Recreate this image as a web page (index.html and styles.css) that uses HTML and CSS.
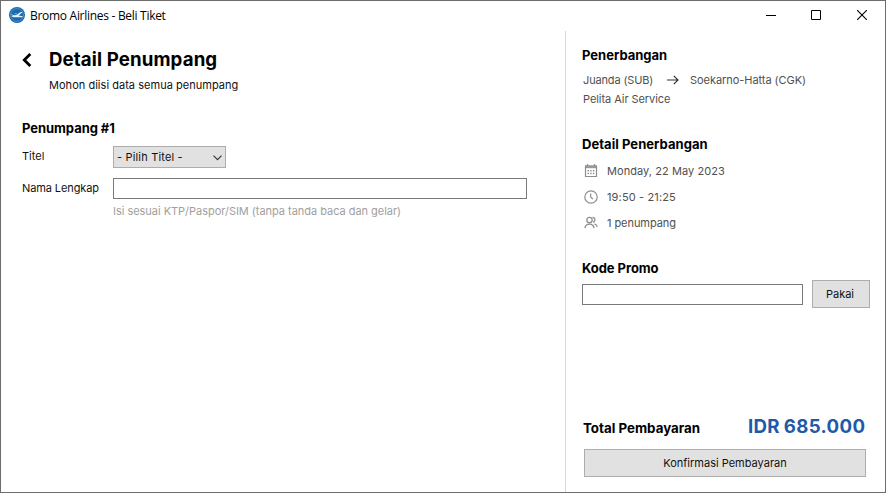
FILE: index.html
```html
<!DOCTYPE html>
<html lang="id">
<head>
<meta charset="utf-8">
<title>Bromo Airlines - Beli Tiket</title>
<link rel="stylesheet" href="styles.css">
</head>
<body>
<div class="window">
  <header class="titlebar">
    <svg class="logo" width="16" height="16" viewBox="0 0 16 16"><circle cx="8" cy="8" r="8" fill="#1c68ae"/><circle cx="8" cy="8" r="6.4" fill="none" stroke="#5ba0d6" stroke-width=".7"/><path d="M1.8 7.6 3 7.4 5 8.3 7.6 8 10.8 5.6 13.2 4.8 13.3 5.6 9.6 8.4 13.8 9.2 13.4 10.2 7.8 10.2 4.5 10.2 2.2 9.2 4.2 9Z" fill="#e3f0fa"/><path d="M4.6 6.2 8.4 6.7 7.4 7.4Z" fill="#b9d9ef"/></svg>
    <span class="app-name">Bromo Airlines - Beli Tiket</span>
    <div class="controls">
      <svg width="10" height="10"><path d="M0 5.5H10" stroke="#000"/></svg>
      <svg width="10" height="10"><path d="M.5.5H9.5V9.5H.5Z" fill="none" stroke="#000"/></svg>
      <svg width="10" height="10"><path d="M0 0 10 10M10 0 0 10" stroke="#000" stroke-width="1.1"/></svg>
    </div>
  </header>
  <div class="content">
    <main class="passengers">
      <div class="heading">
        <svg class="back" width="10" height="14" viewBox="0 0 10 14"><path d="M8.3 1 2.3 7 8.3 13" fill="none" stroke="#000" stroke-width="2.8"/></svg>
        <div>
          <h1>Detail Penumpang</h1>
          <p class="subtitle">Mohon diisi data semua penumpang</p>
        </div>
      </div>
      <h2 class="passenger-title">Penumpang #1</h2>
      <div class="row row-title">
        <span class="label">Titel</span>
        <div class="select"><span>- Pilih Titel -</span><svg width="9" height="6" viewBox="0 0 9 6"><path d="M.5.7 4.5 4.7 8.5.7" fill="none" stroke="#333" stroke-width="1.1"/></svg></div>
      </div>
      <div class="row row-name">
        <span class="label label-name">Nama Lengkap</span>
        <div class="input"></div>
      </div>
      <p class="hint">Isi sesuai KTP/Paspor/SIM (tanpa tanda baca dan gelar)</p>
    </main>
    <aside class="summary">
      <h2 class="flight-title">Penerbangan</h2>
      <div class="route"><span class="from">Juanda (SUB)</span><svg width="12" height="10" viewBox="0 0 12 10"><path d="M0 5H11M6.8.8 11 5 6.8 9.2" fill="none" stroke="#333" stroke-width="1.2"/></svg><span class="to">Soekarno-Hatta (CGK)</span></div>
      <p class="airline">Pelita Air Service</p>
      <h2 class="detail-title">Detail Penerbangan</h2>
      <div class="details">
        <div class="detail"><svg width="14" height="14" viewBox="0 0 14 14"><path d="M1 1.2H13V4.2H1Z" fill="#999"/><path d="M1.5 2V12.5H12.5V2M3.5 0V2M10.5 0V2" fill="none" stroke="#8e8e8e" stroke-width="1.2"/><path d="M3.5 6.8H11M3.5 9.5H11" stroke="#8e8e8e" stroke-width="1.4" stroke-dasharray="1.4 1.3"/></svg><span class="date">Monday, 22 May 2023</span></div>
        <div class="detail"><svg width="14" height="14" viewBox="0 0 14 14"><circle cx="7" cy="7" r="6.2" fill="none" stroke="#8e8e8e" stroke-width="1.2"/><path d="M6.7 3.5V7.3L9 9" fill="none" stroke="#8e8e8e" stroke-width="1.2"/></svg><span class="time">19:50 - 21:25</span></div>
        <div class="detail"><svg width="14" height="14" viewBox="0 0 14 14"><g fill="none" stroke="#8e8e8e" stroke-width="1.3"><circle cx="5.5" cy="4" r="2.7"/><path d="M.9 12.2C1.3 9.4 3 8.1 5.5 8.1S9.7 9.4 10.1 12.2M8.5 1.3C10.4 1.2 11 2.6 10.9 3.8S10 6.1 9.2 6.4M10.3 7.9C12 8.3 12.8 9.2 13.2 10.8"/></g></svg><span class="count">1 penumpang</span></div>
      </div>
      <h2 class="promo-title">Kode Promo</h2>
      <div class="promo"><div class="input promo-input"></div><div class="button apply"><span>Pakai</span></div></div>
      <div class="total"><span class="total-label">Total Pembayaran</span><span class="price">IDR 685.000</span></div>
      <div class="button confirm"><span>Konfirmasi Pembayaran</span></div>
    </aside>
  </div>
</div>
</body>
</html>
```
FILE: styles.css
```css
* { box-sizing: border-box; }
body { margin: 0; font: 11px/16px Inter, sans-serif; color: #111; background: #fff; }
h1, h2, p { margin: 0; }
svg { display: block; flex: none; }
span, h1, h2, p { white-space: nowrap; }
.window { width: 886px; height: 493px; border: 1px solid #6d6d6d; display: flex; flex-direction: column; }
.titlebar { height: 30px; display: flex; align-items: flex-start; padding: 6px 17px 0 8px; }
.app-name { margin: 1px 0 0 5px; font: 12px/16px "Open Sans", "Noto Sans", sans-serif; color: #000; letter-spacing: -0.29px; }
.controls { margin: 3px 0 0 auto; width: 102px; display: flex; justify-content: flex-end; padding-right: 1px; }
.controls svg + svg { margin-left: 35px; }
.controls svg:last-child { margin-left: 36px; }
.content { flex: 1; display: flex; }
.passengers { width: 564px; padding: 16px 0 0 21px; }
.heading { display: flex; }
.back { margin: 6px 17px 0 0; }
h1 { font-size: 18.67px; line-height: 24px; padding-top: 1px; font-weight: 700; color: #000; letter-spacing: 0.12px; }
.subtitle { margin-top: 5px; letter-spacing: 0.03px; }
h2 { font-size: 13px; line-height: 16px; font-weight: 700; color: #000; }
.passenger-title { margin-top: 27px; letter-spacing: -0.05px; }
.row { display: flex; }
.label { width: 91px; flex: none; }
.label-name { letter-spacing: -0.1px; }
.row-title { margin-top: 10px; height: 22px; }
.row-title .label { padding-top: 2px; }
.select { width: 113px; height: 22px; border: 1px solid #adadad; background: #e1e1e1; display: flex; align-items: center; justify-content: space-between; padding: 0 3px 0 3px; letter-spacing: 0.17px; }
.select svg { margin-top: 2px; }
.row-name { margin-top: 10px; height: 21px; }
.row-name .label { padding-top: 2px; }
.input { width: 414px; height: 21px; border: 1px solid #7a7a7a; background: #fff; }
.hint { margin: 4px 0 0 91px; color: #a0a0a0; letter-spacing: -0.03px; }
.summary { flex: 1; border-left: 1px solid #d9d9d9; padding: 16px 15px 0 16px; color: #505050; }
.route { display: flex; align-items: center; margin: 9px 0 0 1px; height: 16px; }
.from { width: 84px; letter-spacing: -0.15px; }
.to { margin-left: 11px; letter-spacing: -0.05px; }
.airline { margin: 3px 0 0 1px; letter-spacing: -0.06px; }
.detail-title { margin-top: 29px; letter-spacing: 0.05px; }
.details { display: grid; gap: 10px; margin: 11px 0 0 2px; }
.detail { display: flex; align-items: center; gap: 9px; }
.date { letter-spacing: 0.06px; }
.time { letter-spacing: 0.14px; }
.count { letter-spacing: -0.06px; }
.promo-title { margin-top: 29px; letter-spacing: -0.05px; }
.promo { display: flex; align-items: center; justify-content: space-between; margin-top: 4px; }
.promo-input { width: 221px; }
.button { border: 1px solid #adadad; background: #e1e1e1; color: #111; display: flex; align-items: center; justify-content: center; }
.apply { width: 58px; height: 28px; padding-right: 2px; }
.total { display: flex; align-items: center; justify-content: space-between; margin: 107px 5px 0 1px; height: 24px; }
.total-label { font-size: 13.33px; font-weight: 700; color: #000; padding-top: 2px; }
.price { font-size: 18.67px; line-height: 24px; font-weight: 700; color: #1f5aa9; letter-spacing: 0.35px; word-spacing: -1px; margin-right: -0.35px; }
.confirm { width: 282px; height: 28px; margin: 10px 0 0 2px; }
```
